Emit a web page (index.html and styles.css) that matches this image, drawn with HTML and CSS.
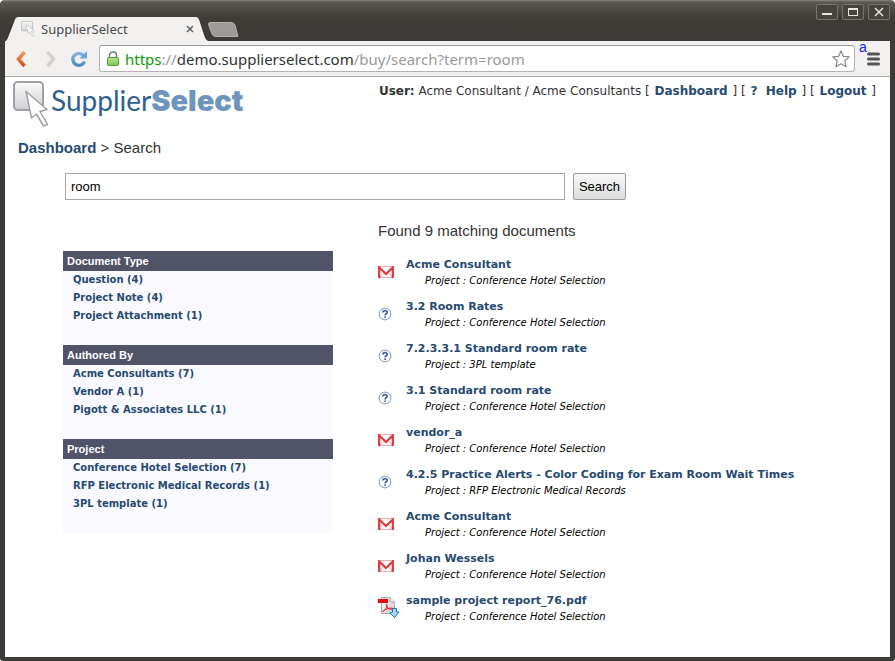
FILE: index.html
```html
<!DOCTYPE html>
<html lang="en">
<head>
<meta charset="utf-8">
<title>SupplierSelect</title>
<link rel="stylesheet" href="styles.css">
</head>
<body>
<svg class="defs" aria-hidden="true">
  <defs>
    <linearGradient id="tile" x1="0" y1="0" x2="0" y2="1"><stop offset="0" stop-color="#fafafa"/><stop offset="1" stop-color="#cfd0d2"/></linearGradient>
    <linearGradient id="orange" x1="0" y1="0" x2="0" y2="1"><stop offset="0" stop-color="#f39a5e"/><stop offset="1" stop-color="#dc4a14"/></linearGradient>
    <linearGradient id="blue" x1="0" y1="0" x2="0" y2="1"><stop offset="0" stop-color="#86b4e2"/><stop offset="1" stop-color="#5088c8"/></linearGradient>
    <linearGradient id="green" x1="0" y1="0" x2="0" y2="1"><stop offset="0" stop-color="#b4e68c"/><stop offset="1" stop-color="#7cc850"/></linearGradient>
    <linearGradient id="sheet" x1="0" y1="0" x2="1" y2="1"><stop offset="0" stop-color="#ffffff"/><stop offset="1" stop-color="#c9c9c9"/></linearGradient>
    <symbol id="mark" viewBox="0 0 36 47">
      <rect x="1" y="1" width="29" height="28" rx="3.5" fill="url(#tile)" stroke="#a0a1a4" stroke-width="2"/>
      <path d="M13 10.500 L34 28.500 L27 30.500 L34.500 43.500 L30.500 45 L23.500 33 L18.500 37 Z" fill="#fff" stroke="#a0a1a4" stroke-width="1.500" stroke-linejoin="round"/>
    </symbol>
    <symbol id="mail" viewBox="0 0 16 12">
      <rect x=".5" y=".5" width="15" height="11" fill="#fff" stroke="#f0a8a8"/>
      <path d="M2 11 L6 6 M14 11 L10 6" fill="none" stroke="#f2b5b5"/>
      <path d="M1.200 12 V1.500 L8 8 L14.800 1.500 V12" fill="none" stroke="#dc3a3c" stroke-width="2.200"/>
    </symbol>
    <symbol id="question" viewBox="0 0 14 14">
      <circle cx="7" cy="7" r="5.900" fill="#fff" stroke="#7b97bd" stroke-width="1"/>
      <path d="M4.900 5.600 C4.900 2.900 9.200 2.900 9.200 5.300 C9.200 6.900 7.100 6.700 7.100 8.500 M7.100 9.500 V11" fill="none" stroke="#3c5fa8" stroke-width="1.700"/>
    </symbol>
    <symbol id="pdf" viewBox="0 0 22 22">
      <path d="M3.500 .5 H12 L16.500 5 V16.500 H3.500 Z" fill="url(#sheet)" stroke="#a8a8a8"/>
      <path d="M12 .5 V5 H16.500" fill="#eee" stroke="#a8a8a8"/>
      <rect x="0" y="2" width="10" height="4" fill="#e30613"/>
      <path d="M4.500 14.500 C8 12.500 10 9.500 8.800 7.500 C8 7 7.800 9 10 11 C12 13 14 12.500 15 11.500 C13 10.500 8 11.500 4.500 14.500" fill="none" stroke="#e0202c"/>
      <path d="M14.500 11.500 H18.500 V15 H21 L16.500 20.500 L12 16 L14.500 15 Z" fill="#9edcff" stroke="#1a6fc0"/>
    </symbol>
  </defs>
</svg>
<div class="window">
  <header class="titlebar">
    <div class="tab">
      <svg class="tab-edge" width="13" height="24" viewBox="0 0 13 24"><path d="M13 0 C10 0 9.500 1 8.500 4 L3 18 C2 21 1 23 0 24 H13 Z" fill="#f2f1f0"/></svg>
      <div class="tab-body">
        <svg class="favicon" width="14" height="16" viewBox="0 0 36 47" preserveAspectRatio="none"><use href="#mark"/></svg>
        <span class="tab-title">SupplierSelect</span>
        <button class="tab-close" aria-label="Close tab"><svg width="8" height="8" viewBox="0 0 8 8"><path d="M1 1 L7 7 M7 1 L1 7" stroke="#666" stroke-width="1.600"/></svg></button>
      </div>
      <svg class="tab-edge" width="13" height="24" viewBox="0 0 13 24"><path d="M0 0 C3 0 3.500 1 4.500 4 L9 18 C10 21 11 23 13 24 H0 Z" fill="#f2f1f0"/></svg>
    </div>
    <button class="new-tab" aria-label="New tab"><svg width="31" height="15" viewBox="0 0 31 15"><path d="M2 .5 H23 Q26 .5 27 3 L30 14.500 H8 Q5 14.500 4 12 L.7 3 Q0 .5 2 .5 Z" fill="#9c9b98" stroke="#b4b3b0"/></svg></button>
    <div class="window-buttons">
      <button aria-label="Minimize"><svg width="12" height="10" viewBox="0 0 12 10"><path d="M1 7 H11" stroke="#e8e6e0" stroke-width="2"/></svg></button>
      <button aria-label="Maximize"><svg width="12" height="10" viewBox="0 0 12 10"><rect x="1.500" y="1.500" width="9" height="7" fill="none" stroke="#e8e6e0"/><path d="M1 2 H11" stroke="#e8e6e0" stroke-width="2"/></svg></button>
      <button aria-label="Close"><svg width="12" height="10" viewBox="0 0 12 10"><path d="M2 1 L10 9 M10 1 L2 9" stroke="#e8e6e0" stroke-width="1.500"/></svg></button>
    </div>
  </header>
  <div class="toolbar">
    <button class="nav" aria-label="Back"><svg width="12" height="18" viewBox="0 0 12 18"><path d="M9.500 2 L3.500 9 L9.500 16" fill="none" stroke="url(#orange)" stroke-width="3.500"/></svg></button>
    <button class="nav" aria-label="Forward"><svg width="12" height="18" viewBox="0 0 12 18"><path d="M2.500 2 L8.500 9 L2.500 16" fill="none" stroke="#d3d2d0" stroke-width="3.500"/></svg></button>
    <button class="nav reload" aria-label="Reload"><svg width="17" height="18" viewBox="0 0 17 18"><path d="M13.500 11.500 A6 6 0 1 1 12.500 5.500" fill="none" stroke="url(#blue)" stroke-width="3.400"/><path d="M16 1 V8.500 H8.500 Z" fill="#6fa3d8"/></svg></button>
    <div class="address">
      <svg width="12" height="15" viewBox="0 0 12 15"><path d="M2.500 7 V4.500 C2.500 -.3 9.500 -.3 9.500 4.500 V7" fill="none" stroke="#777" stroke-width="1.500"/><rect x=".5" y="6.500" width="11" height="8" rx="1" fill="url(#green)" stroke="#549a34"/></svg>
      <span class="url"><span class="scheme">https</span><span class="dim">://</span>demo.supplierselect.com<span class="dim">/buy/search?term=room</span></span>
      <button class="star" aria-label="Bookmark this page"><svg width="18" height="18" viewBox="0 0 18 18"><path d="M9 1 L11.300 6.300 L17.200 6.900 L12.800 10.800 L14.100 16.800 L9 13.700 L3.900 16.800 L5.200 10.800 L.8 6.900 L6.700 6.300 Z" fill="#fff" stroke="#888" stroke-width="1.200" stroke-linejoin="round"/></svg></button>
    </div>
    <button class="menu" aria-label="Menu"><svg width="13" height="14" viewBox="0 0 13 14"><path d="M1.500 2 H11.500 M1.500 7 H11.500 M1.500 12 H11.500" stroke="#555" stroke-width="3" stroke-linecap="round"/></svg><span class="marker">a</span></button>
  </div>
  <main class="page">
    <div class="top">
      <a class="logo" href="#"><svg width="36" height="47"><use href="#mark"/></svg><span class="logo-text">Supplier<b>Select</b></span></a>
      <div class="user"><b>User:</b> Acme Consultant / Acme Consultants [ <a href="#">Dashboard</a> ] [ <a href="#">?&nbsp; Help</a> ] [ <a href="#">Logout</a> ]</div>
    </div>
    <nav class="crumbs"><a href="#">Dashboard</a> &gt; Search</nav>
    <form class="search">
      <input type="text" value="room" aria-label="Search term">
      <button type="button">Search</button>
    </form>
    <div class="columns">
      <aside class="facets">
        <section><h2>Document Type</h2><ul><li><a href="#">Question (4)</a></li><li><a href="#">Project Note (4)</a></li><li><a href="#">Project Attachment (1)</a></li></ul></section>
        <section><h2>Authored By</h2><ul><li><a href="#">Acme Consultants (7)</a></li><li><a href="#">Vendor A (1)</a></li><li><a href="#">Pigott &amp; Associates LLC (1)</a></li></ul></section>
        <section><h2>Project</h2><ul><li><a href="#">Conference Hotel Selection (7)</a></li><li><a href="#">RFP Electronic Medical Records (1)</a></li><li><a href="#">3PL template (1)</a></li></ul></section>
      </aside>
      <section class="results">
        <h1>Found 9 matching documents</h1>
        <ul>
          <li><svg width="16" height="12"><use href="#mail"/></svg><div><a href="#">Acme Consultant</a><p>Project : Conference Hotel Selection</p></div></li>
          <li><svg width="14" height="14"><use href="#question"/></svg><div><a href="#">3.2 Room Rates</a><p>Project : Conference Hotel Selection</p></div></li>
          <li><svg width="14" height="14"><use href="#question"/></svg><div><a href="#">7.2.3.3.1 Standard room rate</a><p>Project : 3PL template</p></div></li>
          <li><svg width="14" height="14"><use href="#question"/></svg><div><a href="#">3.1 Standard room rate</a><p>Project : Conference Hotel Selection</p></div></li>
          <li><svg width="16" height="12"><use href="#mail"/></svg><div><a href="#">vendor_a</a><p>Project : Conference Hotel Selection</p></div></li>
          <li><svg width="14" height="14"><use href="#question"/></svg><div><a href="#">4.2.5 Practice Alerts - Color Coding for Exam Room Wait Times</a><p>Project : RFP Electronic Medical Records</p></div></li>
          <li><svg width="16" height="12"><use href="#mail"/></svg><div><a href="#">Acme Consultant</a><p>Project : Conference Hotel Selection</p></div></li>
          <li><svg width="16" height="12"><use href="#mail"/></svg><div><a href="#">Johan Wessels</a><p>Project : Conference Hotel Selection</p></div></li>
          <li><svg width="22" height="22"><use href="#pdf"/></svg><div><a href="#">sample project report_76.pdf</a><p>Project : Conference Hotel Selection</p></div></li>
        </ul>
      </section>
    </div>
  </main>
</div>
</body>
</html>
```
FILE: styles.css
```css
* { box-sizing: border-box; }
body { margin: 0; background: #fff; font-family: "DejaVu Sans", sans-serif; color: #333; }
ul, h1, h2, p { margin: 0; padding: 0; list-style: none; }
button { padding: 0; border: 0; background: none; }
svg { display: block; flex: none; }
a { color: #274a70; font-weight: bold; text-decoration: none; }
.defs { position: absolute; width: 0; height: 0; }

.window { display: flex; flex-direction: column; min-height: 100vh; padding: 0 5px 4px; background: #3c3b37; border-radius: 5px 5px 3px 3px; }
.titlebar { display: flex; height: 41px; margin: 0 -5px; padding-left: 6px; background: linear-gradient(#8a8983 0, #5a5952 2px, #3e3d38 18px, #3c3b37); border-radius: 5px 5px 0 0; align-items: flex-end; }
.tab { display: flex; }
.tab-body { display: flex; align-items: center; width: 176px; height: 24px; padding-left: 2px; background: #f2f1f0; }
.favicon { opacity: .8; }
.tab-title { flex: 1; margin-left: 6px; font: 13px/20px "Noto Sans", sans-serif; color: #4a4a4a; }
.tab-close { margin-right: 1px; }
.new-tab { align-self: center; margin-top: 17px; }
.window-buttons { display: flex; gap: 4px; align-self: flex-start; margin: 4px 5px 0 auto; }
.window-buttons button { display: grid; place-items: center; width: 22px; height: 16px; border: 1px solid #77756c; border-radius: 2px; background: #45443f; }

.toolbar { display: flex; align-items: center; height: 36px; padding: 0 10px; background: #f2f1f0; border-bottom: 1px solid #a9a8a6; }
.nav { margin-right: 18px; }
.reload { margin: 0 11px 0 -4px; }
.address { display: flex; flex: 1; align-items: center; height: 27px; padding: 0 4px 0 7px; background: #fff; border: 1px solid #b4b2ae; border-top-color: #999; border-radius: 3px; }
.url { flex: 1; margin-left: 6px; font: 15px/22px "Noto Sans", sans-serif; color: #333; }
.scheme { color: #0a9a0a; }
.dim { color: #999; }
.menu { position: relative; margin-left: 12px; }
.marker { position: absolute; left: -8px; top: -13px; font: 14px/16px "Liberation Sans", sans-serif; color: #1020ff; }

.page { flex: 1; padding: 4px 14px 16px 8px; background: #fff; }
.top { display: flex; justify-content: space-between; }
.logo { display: flex; }
.logo-text { margin-left: 2px; font: 28px/38px Lato, sans-serif; color: #2f5f94; }
.logo-text b { font-family: Inter, sans-serif; font-weight: 900; font-size: 29px; color: #6e95bd; }
.user { font-size: 12px; line-height: 20px; white-space: pre; }
.user a { margin: 0 1px; }
.crumbs { margin: 11px 0 0 5px; font: 15px/18px "Liberation Sans", sans-serif; }
.search { display: flex; gap: 8px; margin: 16px 0 0 52px; }
.search input { flex: 0 1 500px; min-width: 0; height: 27px; padding: 0 5px; border: 1px solid #a6a6a6; font: 13px "Liberation Sans", sans-serif; color: #000; }
.search button { width: 53px; height: 27px; border: 1px solid #999; border-radius: 2px; background: linear-gradient(#f8f8f8, #dcdcdc); font: 13px "Liberation Sans", sans-serif; color: #000; }
.columns { display: flex; gap: 45px; margin: 22px 0 0 50px; }
.facets { width: 270px; flex: none; margin-top: 29px; }
.facets section { padding-bottom: 20px; background: #f9f9ff; }
.facets h2 { padding-left: 4px; background: #515369; font: bold 11px/20px "Liberation Sans", sans-serif; color: #fff; }
.facets li { padding-left: 10px; font-size: 10px; line-height: 18px; }
.results { flex: 1; }
.results h1 { margin-bottom: 17px; font: 15px/18px "Liberation Sans", sans-serif; }
.results li { display: grid; grid-template-columns: 28px 1fr; align-items: center; margin-bottom: 10px; font-size: 11px; line-height: 16px; }
.results li svg { margin-bottom: 2px; }
.results li a { display: block; }
.results p { padding-left: 19px; font-size: 10px; font-style: italic; color: #000; }
```
